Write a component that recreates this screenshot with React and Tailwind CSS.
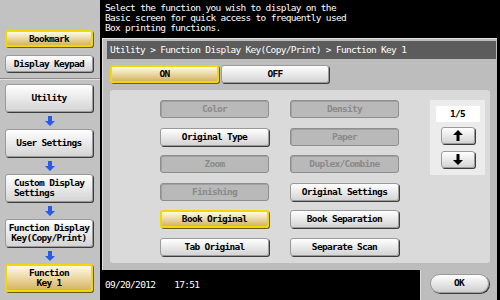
import React from "react";

const mono = "font-['DejaVu_Sans_Mono',monospace] text-[9.5px] tracking-[-0.7px]";

function Key({ children, kind = "normal", className = "" }) {
  const styles = {
    normal:
      "bg-gradient-to-b from-[#ffffff] to-[#d4d4d4] border border-[#9a9a9a] shadow-[1px_1px_0_#3c3c3c] text-black",
    off: "bg-[#b9b9b9] border border-[#8e8e8e] shadow-[inset_1px_1px_0_#a0a0a0] text-[#8a8a8a]",
    on: "bg-gradient-to-b from-[#fffbe6] to-[#d6b45e] border-2 border-[#f2d800] shadow-[1px_1px_0_#6a5a20] text-black",
  };
  return (
    <div
      className={`flex items-center justify-center rounded-[3px] font-bold leading-[10px] text-center ${mono} ${styles[kind]} ${className}`}
    >
      {children}
    </div>
  );
}

function BlueArrow() {
  return (
    <div className="flex h-[17px] items-center justify-center">
      <svg width="10" height="10" viewBox="0 0 10 10">
        <path d="M3 0h4v5h3L5 10 0 5h3z" fill="#2a5ae8" />
      </svg>
    </div>
  );
}

function PageArrow({ up }) {
  return (
    <Key className="h-[17px] w-[34px]">
      <svg width="10" height="11" viewBox="0 0 10 11">
        {up ? (
          <path d="M5 0L10 5H6.5V11h-3V5H0z" fill="#000" />
        ) : (
          <path d="M5 11L0 6h3.5V0h3v6H10z" fill="#000" />
        )}
      </svg>
    </Key>
  );
}

export default function App() {
  const grid = [
    ["Color", "off"],
    ["Density", "off"],
    ["Original Type", "normal"],
    ["Paper", "off"],
    ["Zoom", "off"],
    ["Duplex/Combine", "off"],
    ["Finishing", "off"],
    ["Original Settings", "normal"],
    ["Book Original", "on"],
    ["Book Separation", "normal"],
    ["Tab Original", "normal"],
    ["Separate Scan", "normal"],
  ];

  return (
    <div className="flex h-[300px] w-[500px] overflow-hidden bg-black">
      {/* Sidebar */}
      <div className="flex w-[100px] flex-col bg-[#c2c2c2]">
        <div className="flex h-[79px] flex-col gap-[8px] border-b border-[#8a8a8a] px-[5px] pt-[30px]">
          <Key kind="on" className="h-[17px] w-[88px]">Bookmark</Key>
          <Key className="h-[17px] w-[88px]">Display Keypad</Key>
        </div>
        <div className="flex flex-col border-t border-[#e2e2e2] px-[5px] pt-[4px]">
          <Key className="h-[28px] w-[88px]">Utility</Key>
          <BlueArrow />
          <Key className="h-[28px] w-[88px]">User Settings</Key>
          <BlueArrow />
          <Key className="h-[28px] w-[88px] !justify-start pl-[8px] text-left">
            Custom Display
            <br />
            Settings
          </Key>
          <BlueArrow />
          <Key className="h-[28px] w-[88px]">
            Function Display
            <br />
            Key(Copy/Print)
          </Key>
          <BlueArrow />
          <Key kind="on" className="h-[28px] w-[88px]">
            Function
            <br />
            Key 1
          </Key>
        </div>
      </div>

      {/* Main */}
      <div className="flex flex-1 flex-col">
        <div className={`h-[38px] pl-[5px] pt-[3px] leading-[10px] text-white ${mono}`}>
          Select the function you wish to display on the
          <br />
          Basic screen for quick access to frequently used
          <br />
          Box printing functions.
        </div>

        <div className="ml-[2px] mr-[3px] flex h-[232px] flex-col border-l border-t border-[#e0e0e0] bg-[#bdbdbd] pl-[4px] pr-[1px] pt-[2px]">
          <div className={`flex h-[18px] items-center bg-[#5c5c5c] pl-[3px] text-white ${mono}`}>
            Utility &gt; Function Display Key(Copy/Print) &gt; Function Key 1
          </div>
          <div className="mt-[6px] flex gap-[2px] pl-[3px]">
            <Key kind="on" className="h-[18px] w-[109px]">ON</Key>
            <Key className="h-[18px] w-[108px]">OFF</Key>
          </div>
          <div className="mb-[7px] ml-[3px] mr-[6px] mt-[7px] flex flex-1 rounded-[3px] bg-[#dadada] pl-[50px] pt-[10px]">
            <div className="grid grid-cols-[109px_109px] gap-x-[21px] gap-y-[9.6px] self-start">
              {grid.map(([label, kind]) => (
                <Key key={label} kind={kind} className="h-[18px]">
                  {label}
                </Key>
              ))}
            </div>
            <div className="ml-[31px] flex h-[75px] w-[55px] flex-col items-center bg-[#ececec] pt-[6px]">
              <div className={`flex h-[16px] w-[44px] items-center justify-center bg-white font-bold ${mono}`}>
                1/5
              </div>
              <div className="mt-[5px]">
                <PageArrow up />
              </div>
              <div className="mt-[7px]">
                <PageArrow />
              </div>
            </div>
          </div>
        </div>

        <div className="flex flex-1">
          <div className={`flex flex-1 items-center gap-[19px] pl-[5px] pt-[1px] text-white ${mono}`}>
            <span>09/20/2012</span>
            <span>17:51</span>
          </div>
          <div className="mr-[3px] flex w-[77px] items-start justify-center border-l border-[#d8d8d8] bg-[#bdbdbd] pt-[4px]">
            <div
              className={`flex h-[19px] w-[59px] items-center justify-center rounded-full border border-[#9a9a9a] bg-gradient-to-b from-[#ffffff] to-[#cfcfcf] font-bold shadow-[1px_1px_0_#3c3c3c] ${mono}`}
            >
              OK
            </div>
          </div>
        </div>
      </div>
    </div>
  );
}
